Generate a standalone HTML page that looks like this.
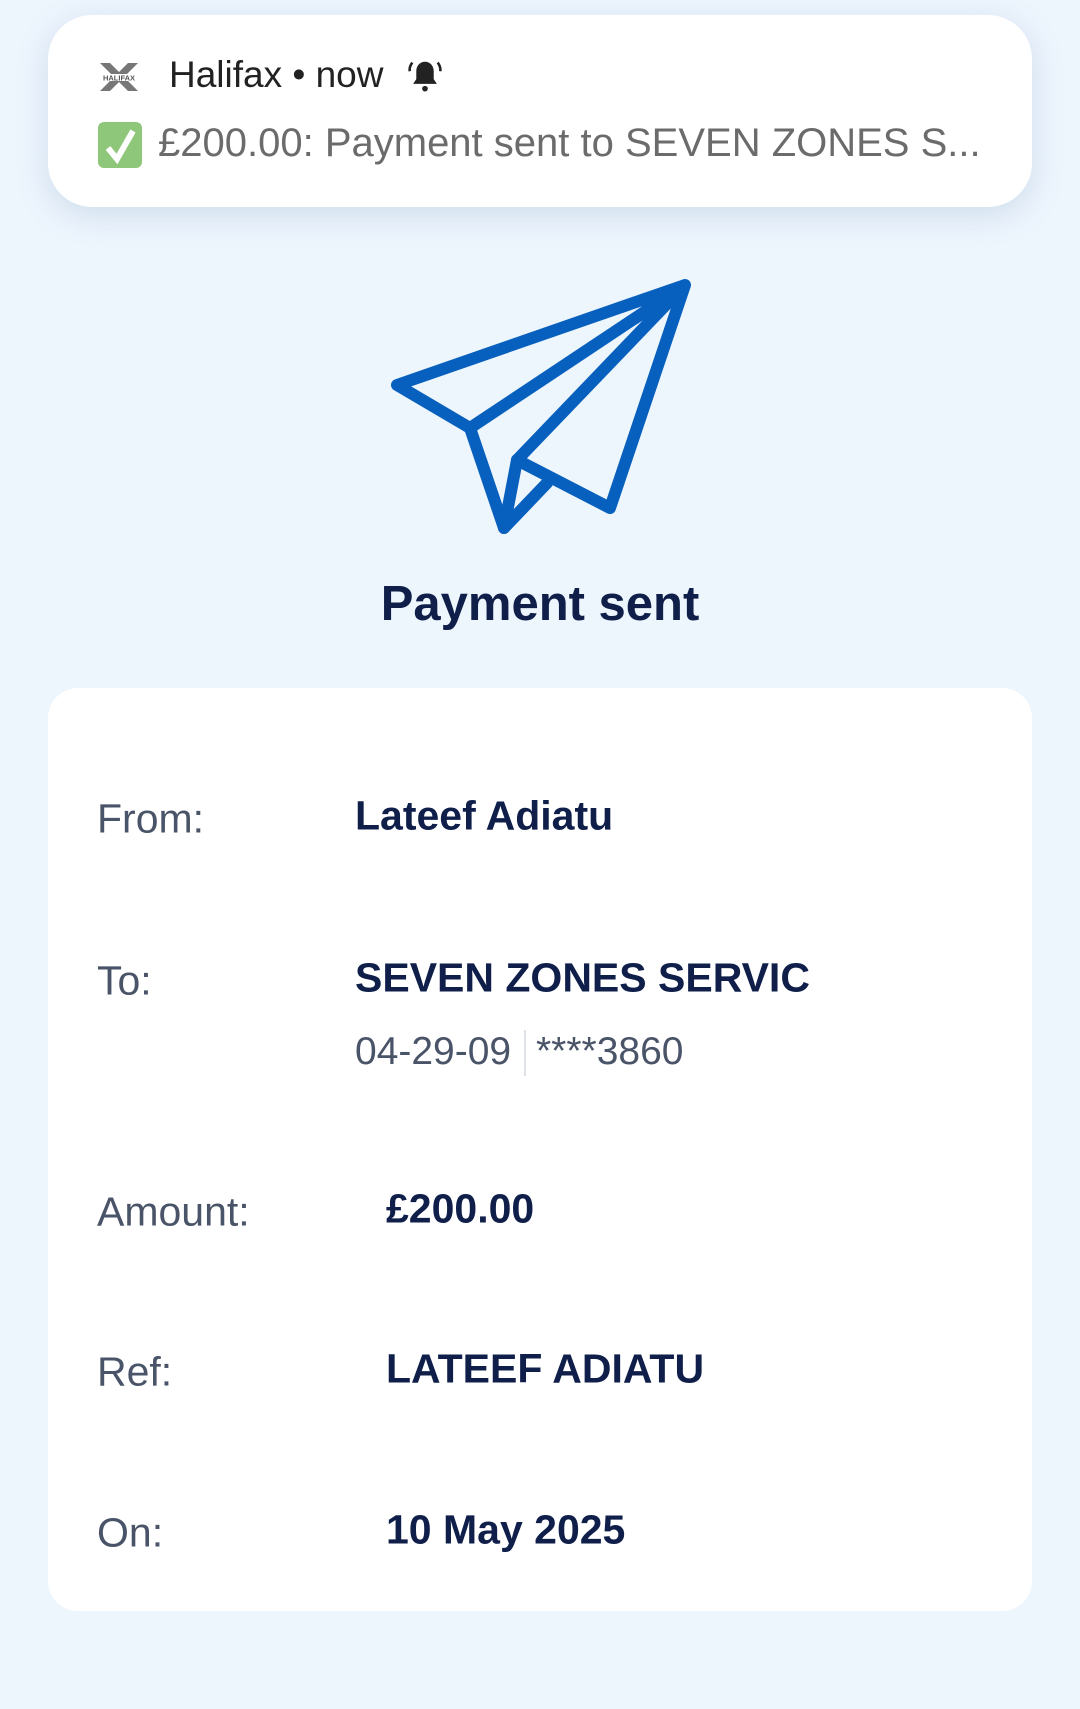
<!DOCTYPE html>
<html><head><meta charset="utf-8"><style>
*{margin:0;padding:0;box-sizing:border-box}
body{width:1080px;height:1709px;background:#edf5fd;font-family:"Liberation Sans",sans-serif;position:relative;overflow:hidden}
.notif{position:absolute;left:48px;top:15px;width:984px;height:192px;background:#fff;border-radius:44px;box-shadow:0 8px 30px rgba(120,150,190,0.25)}
.t{position:absolute;white-space:nowrap}
.card{position:absolute;left:48px;top:688px;width:984px;height:923px;background:#fff;border-radius:30px}
.lab{position:absolute;left:49px;font-size:41px;color:#4a5468;transform:translateY(-50%)}
.val{position:absolute;font-size:41px;font-weight:bold;color:#0f1f4a;transform:translateY(-50%);white-space:nowrap}
</style></head><body>
<div class="notif">
  <svg class="t" style="left:50px;top:48px" width="42" height="28" viewBox="0 0 42 28">
    <polygon points="2,0 12,0 21,9 30,0 40,0 26,14 40,28 30,28 21,19 12,28 2,28 16,14" fill="#777"/>
    <rect x="0" y="11" width="42" height="7" fill="#fff"/>
    <text x="21" y="17.5" font-size="7.5" font-weight="bold" text-anchor="middle" fill="#555" font-family="Liberation Sans">HALIFAX</text>
  </svg>
  <div class="t" style="left:121px;top:39px;font-size:37px;color:#222">Halifax • now</div>
  <svg class="t" style="left:358px;top:42px" width="38" height="38" viewBox="0 0 24 24">
    <path d="M12 3c-3.3 0-5.5 2.6-5.5 6v5l-2 3h15l-2-3V9c0-3.4-2.2-6-5.5-6z" fill="#222"/>
    <circle cx="12" cy="20" r="1.8" fill="#222"/>
    <path d="M4 3.5 Q2 6 2.3 9 M20 3.5 Q22 6 21.7 9" stroke="#222" stroke-width="1.6" fill="none"/>
  </svg>
  <div class="t" style="left:50px;top:107px;width:44px;height:46px;background:#8fc77a;border-radius:6px"></div>
  <svg class="t" style="left:52px;top:109px" width="40" height="42" viewBox="0 0 40 42"><path d="M8 24 L17 35 L33 7" stroke="#fff" stroke-width="6" fill="none"/></svg>
  <div class="t" style="left:110px;top:106px;font-size:40px;color:#6b6b6b">£200.00: Payment sent to SEVEN ZONES S...</div>
</div>
<svg class="t" style="left:0;top:0" width="1080" height="700">
  <g stroke="#0760bd" stroke-width="12" fill="none" stroke-linejoin="round" stroke-linecap="round">
    <path d="M685 285 L397 385 L470 428 L685 285 L517 460 L610 508 Z"/>
    <path d="M470 428 L504 528 L547 483"/>
    <path d="M517 460 L504 528"/>
  </g>
</svg>
<div class="t" style="left:0;width:1080px;text-align:center;top:576px;font-size:49px;font-weight:bold;color:#0f1f4a">Payment sent</div>
<div class="card">
  <div class="lab" style="top:131px">From:</div>
  <div class="val" style="left:307px;top:128px">Lateef Adiatu</div>
  <div class="lab" style="top:293px">To:</div>
  <div class="val" style="left:307px;top:290px">SEVEN ZONES SERVIC</div>
  <div class="t" style="left:307px;top:364px;transform:translateY(-50%);font-size:39px;color:#4a5468">04-29-09</div>
  <div class="t" style="left:476px;top:342px;width:2px;height:46px;background:#dde2e8"></div>
  <div class="t" style="left:488px;top:364px;transform:translateY(-50%);font-size:39px;color:#4a5468">****3860</div>
  <div class="lab" style="top:524px">Amount:</div>
  <div class="val" style="left:338px;top:521px">£200.00</div>
  <div class="lab" style="top:684px">Ref:</div>
  <div class="val" style="left:338px;top:681px">LATEEF ADIATU</div>
  <div class="lab" style="top:845px">On:</div>
  <div class="val" style="left:338px;top:842px">10 May 2025</div>
</div>
</body></html>
